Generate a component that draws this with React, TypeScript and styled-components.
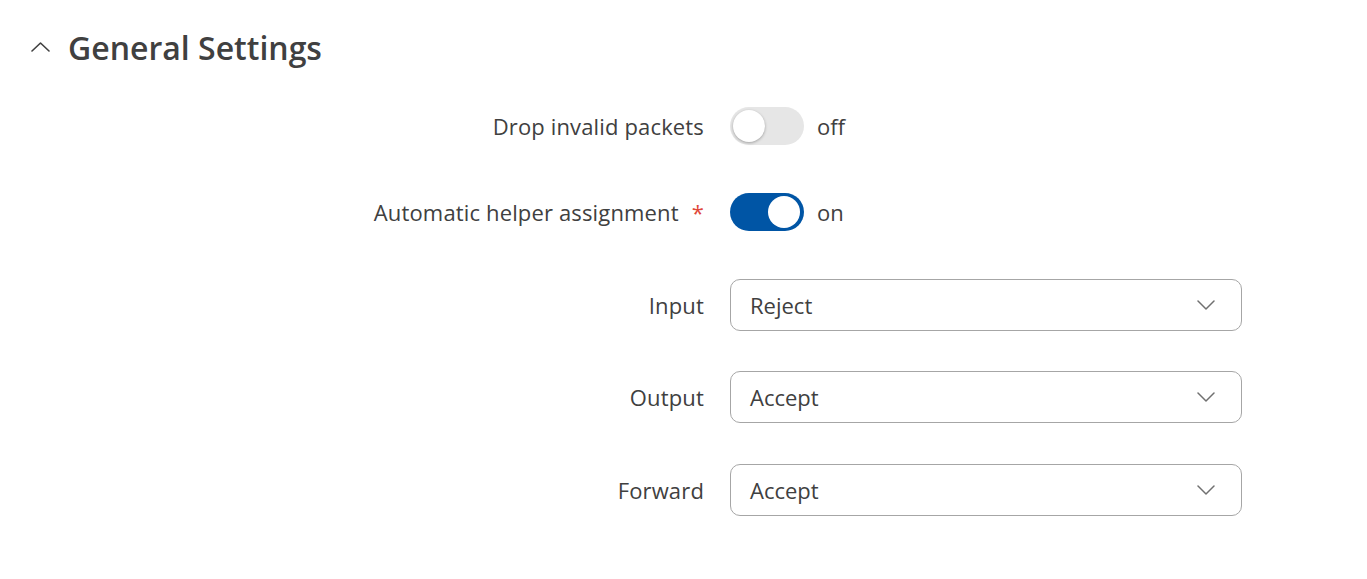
import React, { useState } from 'react';
import styled, { createGlobalStyle } from 'styled-components';

const GlobalStyle = createGlobalStyle`
  body {
    margin: 0;
    background: #fff;
    font-family: 'Open Sans', 'Liberation Sans', sans-serif;
    color: #404040;
  }
`;

const Page = styled.div`
  width: 1367px;
  height: 579px;
  overflow: hidden;
`;

const Header = styled.div`
  display: flex;
  align-items: center;
  gap: 18px;
  padding: 25px 0 0 31px;
  height: 44px;
  cursor: pointer;
`;

const Title = styled.h2`
  margin: 0;
  font-size: 32px;
  font-weight: 600;
  color: #404040;
`;

const Form = styled.div`
  display: flex;
  flex-direction: column;
  padding-top: 38px;
`;

const Row = styled.div<{ $gap: number }>`
  display: flex;
  align-items: center;
  gap: 26px;
  margin-bottom: ${(p) => p.$gap}px;
`;

const Label = styled.label`
  width: 704px;
  text-align: right;
  font-size: 22px;
  letter-spacing: 0.15px;
  color: #404040;
  flex-shrink: 0;
  margin-top: -1px;
`;

const Required = styled.span`
  color: #e0473a;
  margin-left: 13px;
`;

const ToggleWrap = styled.div`
  display: flex;
  align-items: center;
  gap: 13px;
  font-size: 22px;
  color: #404040;
`;

const Track = styled.div<{ $on: boolean }>`
  position: relative;
  width: 74px;
  height: 38px;
  border-radius: 19px;
  background: ${(p) => (p.$on ? '#0055a5' : '#e6e6e6')};
  cursor: pointer;
`;

const Knob = styled.div<{ $on: boolean }>`
  position: absolute;
  top: 3px;
  left: ${(p) => (p.$on ? '38px' : '3px')};
  width: 32px;
  height: 32px;
  border-radius: 50%;
  background: #fff;
  box-shadow: ${(p) => (p.$on ? 'none' : '0 1px 3px rgba(0,0,0,0.3)')};
`;

const Select = styled.div`
  width: 512px;
  height: 52px;
  box-sizing: border-box;
  border: 1px solid #a6a6a6;
  border-radius: 10px;
  display: flex;
  align-items: center;
  justify-content: space-between;
  padding: 0 26px 0 19px;
  font-size: 22px;
  color: #404040;
  cursor: pointer;
`;

const Chevron = () => (
  <svg width="18" height="10" viewBox="0 0 18 10" fill="none">
    <path d="M1 1 L9 9 L17 1" stroke="#707070" strokeWidth="1.5" strokeLinecap="round" strokeLinejoin="round" />
  </svg>
);

const Toggle = ({ on, onClick }: { on: boolean; onClick: () => void }) => (
  <ToggleWrap>
    <Track $on={on} onClick={onClick}>
      <Knob $on={on} />
    </Track>
    <span>{on ? 'on' : 'off'}</span>
  </ToggleWrap>
);

export default () => {
  const [drop, setDrop] = useState(false);
  const [auto, setAuto] = useState(true);

  return (
    <Page>
      <GlobalStyle />
      <Header>
        <svg width="19" height="10" viewBox="0 0 19 10" fill="none">
          <path d="M1 9 L9.5 1 L18 9" stroke="#404040" strokeWidth="1.6" strokeLinecap="round" strokeLinejoin="round" />
        </svg>
        <Title>General Settings</Title>
      </Header>
      <Form>
        <Row $gap={48}>
          <Label>Drop invalid packets</Label>
          <Toggle on={drop} onClick={() => setDrop(!drop)} />
        </Row>
        <Row $gap={48}>
          <Label>
            Automatic helper assignment<Required>*</Required>
          </Label>
          <Toggle on={auto} onClick={() => setAuto(!auto)} />
        </Row>
        <Row $gap={40}>
          <Label>Input</Label>
          <Select>
            <span>Reject</span>
            <Chevron />
          </Select>
        </Row>
        <Row $gap={41}>
          <Label>Output</Label>
          <Select>
            <span>Accept</span>
            <Chevron />
          </Select>
        </Row>
        <Row $gap={0}>
          <Label>Forward</Label>
          <Select>
            <span>Accept</span>
            <Chevron />
          </Select>
        </Row>
      </Form>
    </Page>
  );
};
